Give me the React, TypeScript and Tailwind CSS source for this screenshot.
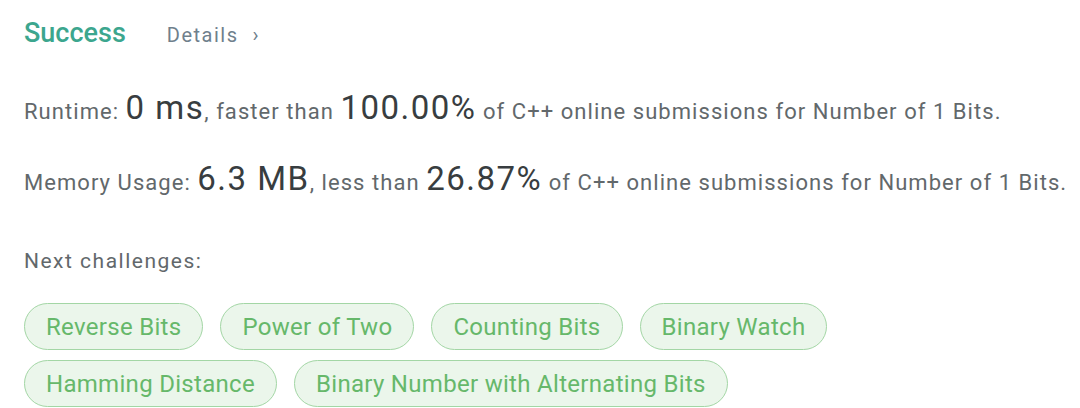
import React from "react";

const chips1 = ["Reverse Bits", "Power of Two", "Counting Bits", "Binary Watch"];
const chips2 = ["Hamming Distance", "Binary Number with Alternating Bits"];

function Chip({ label }: { label: string }) {
  return (
    <span className="inline-flex h-[47px] items-center rounded-full border border-[#a3d6a5] bg-[#ebf6eb] px-[21px] text-[24px] tracking-[0.3px] text-[#66b86a]">
      {label}
    </span>
  );
}

export default function App() {
  return (
    <div
      className="h-[408px] w-[1080px] overflow-hidden bg-white pl-[24px] text-[#62686b]"
      style={{ fontFamily: "Roboto, 'Noto Sans', sans-serif" }}
    >
      <div className="flex items-baseline pt-[17px] leading-[32px]">
        <span className="text-[27px] font-medium text-[#3ca68e]">Success</span>
        <span className="ml-[41px] text-[20px] tracking-[1.5px] text-[#6f808c]">
          Details<span className="ml-[14px]">›</span>
        </span>
      </div>
      <div className="mt-[37px] flex items-baseline whitespace-nowrap text-[22px] leading-[40px] tracking-[1.05px]">
        <span>Runtime:&nbsp;</span>
        <span className="text-[33px] tracking-[1.5px] text-[#383d40]">0 ms</span>
        <span>, faster than&nbsp;</span>
        <span className="text-[33px] tracking-[1.5px] text-[#383d40]">100.00%</span>
        <span>&nbsp;of C++ online submissions for Number of 1 Bits.</span>
      </div>
      <div className="mt-[27px] flex items-baseline whitespace-nowrap text-[22px] leading-[40px] tracking-[1.05px]">
        <span>Memory Usage:&nbsp;</span>
        <span className="text-[33px] tracking-[1.5px] text-[#383d40]">6.3 MB</span>
        <span>, less than&nbsp;</span>
        <span className="text-[33px] tracking-[1.5px] text-[#383d40]">26.87%</span>
        <span>&nbsp;of C++ online submissions for Number of 1 Bits.</span>
      </div>
      <div className="mt-[44px] text-[21px] leading-[28px] tracking-[1.5px]">Next challenges:</div>
      <div className="mt-[28px] flex flex-col gap-[10px]">
        <div className="flex gap-[17px]">
          {chips1.map((c) => (
            <Chip key={c} label={c} />
          ))}
        </div>
        <div className="flex gap-[17px]">
          {chips2.map((c) => (
            <Chip key={c} label={c} />
          ))}
        </div>
      </div>
    </div>
  );
}
